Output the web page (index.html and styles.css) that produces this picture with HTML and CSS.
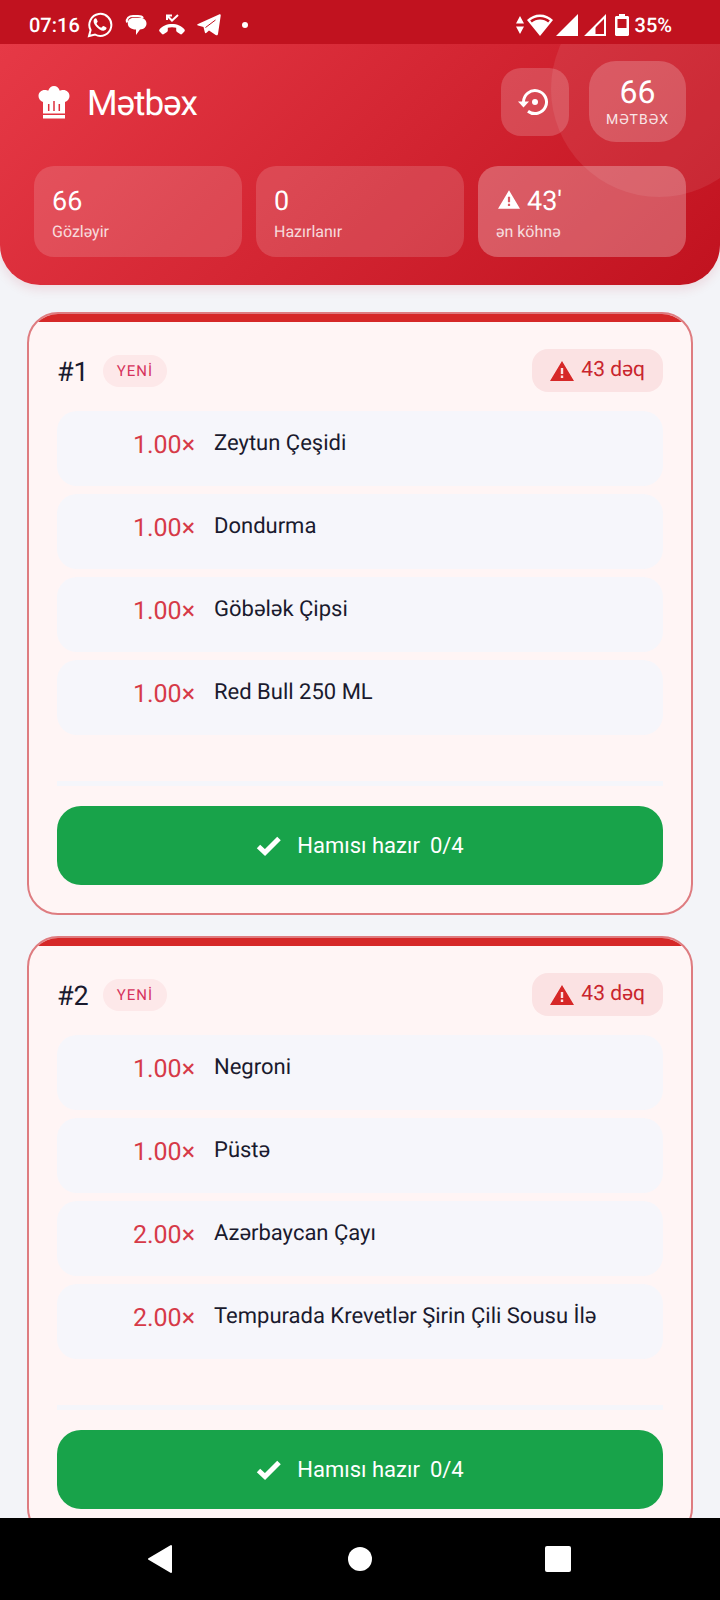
FILE: index.html
```html
<!DOCTYPE html>
<html lang="az">
<head>
  <meta charset="UTF-8">
  <title>Mətbəx</title>
  <meta name="viewport" content="width=device-width, initial-scale=1.0">
  <link rel="stylesheet" href="styles.css">
</head>
<body>

  <div class="status-bar">
    <div class="status-left">
      <span>07:16</span>
      <svg width="26" height="26" viewBox="0 0 26 26" fill="none" stroke="#fff" stroke-width="2">
        <path d="M2 24l1.600-6A11 11 0 1 1 8 22.500z"/>
        <path fill="#fff" stroke="none" d="M9.500 6.800c-.5-1-1.500-.6-2.200.2-1.500 2-.6 4.600 1.600 7.200 2.400 2.800 5.300 4.600 7.600 4.500 1.700-.1 3.200-1.400 3.100-2.900 0-.5-2.900-2-3.500-1.900-.6.100-1.200 1.700-1.800 1.700-1.300-.1-4.500-3-4.700-4.200 0-.5 1.100-1.200 1.100-1.900z"/>
      </svg>
      <svg width="22" height="22" viewBox="0 0 22 22">
        <path fill="none" stroke="#fff" stroke-width="2" d="M2 8.500C1 4.500 4 2 8 2h5c2 0 4 .5 5 2"/>
        <path fill="#fff" d="M9 3.800h6c4 0 6.500 2.500 6.500 5.700s-2.500 6-6.500 6L11 21v-5.500C6 15.500 2.800 13 2.800 9.500S5 3.800 9 3.800z"/>
      </svg>
      <svg width="26" height="22" viewBox="0 0 26 22">
        <path fill="#fff" d="M13 10c5 0 10 2 12.500 5.500.5.700.4 1.300-.1 1.900L23 20c-.5.500-1.300.5-1.900.1L18 18c-.6-.4-.8-.9-.8-1.500v-2.700c-2.700-.8-5.700-.8-8.400 0v2.700c0 .6-.2 1.100-.8 1.500l-3.100 2.100c-.6.400-1.400.4-1.900-.1L.6 17.400c-.5-.6-.6-1.200-.1-1.900C3 12 8 10 13 10z"/>
        <path fill="none" stroke="#fff" stroke-width="2" d="M8 6V1.500h5M8.500 2l4.500 4.500L19 1"/>
      </svg>
      <svg width="24" height="22" viewBox="0 0 24 22">
        <path fill="#fff" d="M1 10L22 .5c1.200-.5 1.900.1 1.700 1.300L21 20c-.3 1.400-1.100 1.700-2.300 1L12 16.500l-2.500 2.300c-.7.700-1.500.4-1.700-.6L6.500 13 1 11.500c-1-.4-1-1.100 0-1.500z"/>
        <path fill="none" stroke="#c1121f" stroke-width="1" d="M8.500 13.500L18.500 6"/>
      </svg>
      <span class="dot"></span>
    </div>
    <div class="status-right">
      <svg width="8" height="20" viewBox="0 0 8 20" fill="#fff"><path d="M0 8.500L4 1l4 7.500zM0 11.500h8L4 19z"/></svg>
      <svg width="26" height="22" viewBox="0 0 26 22">
        <path fill="#fff" d="M13 22L0 6C7-1.500 19-1.500 26 6z"/>
        <path fill="none" stroke="#c1121f" stroke-width="2.500" d="M4 7.500c5-4.500 13-4.500 18 0"/>
      </svg>
      <svg width="22" height="22" viewBox="0 0 22 22"><path fill="#fff" d="M0 22L22 0v22z"/></svg>
      <svg width="22" height="22" viewBox="0 0 22 22">
        <path fill="none" stroke="#fff" stroke-width="2" d="M2.500 21L21 2.500V21z"/>
        <path fill="#fff" d="M1 22L11.500 11.500V22z"/>
      </svg>
      <svg width="14" height="22" viewBox="0 0 14 22">
        <path fill="#fff" fill-rule="evenodd" d="M4 0h6v2h3l1 1v18l-1 1H1l-1-1V3l1-1h3zM2.500 5v9h9V5z"/>
      </svg>
      <span>35%</span>
    </div>
  </div>

  <main class="screen">
    <header class="header">
      <div class="header-row">
        <svg class="chef" width="32" height="34" viewBox="0 0 32 34">
          <path fill="#fff" d="M5 28.500V17C2 16 .5 13.500.5 11 .5 7 4 4.500 7.500 5c1 0 2 .3 2.700.8C11.200 2.500 13.300 1 16 1s4.800 1.500 5.800 4.800c.7-.5 1.700-.8 2.700-.8 3.500-.5 7 2 7 6 0 2.500-1.500 5-4.500 6v11.500zM5 30h22v3.500H5z"/>
          <path stroke="#dd2f3d" stroke-width="1.500" d="M10.700 19v7M16 16v10M21.300 19v7"/>
        </svg>
        <h1>Mətbəx</h1>
        <button type="button" class="history-btn" aria-label="Tarixçə">
          <svg width="34" height="28" viewBox="0 0 34 28">
            <path fill="none" stroke="#fff" stroke-width="3" d="M5.500 14A11.500 11.500 0 1 1 10 23.200"/>
            <path fill="#fff" d="M0 13.500h11l-5.500 6z"/>
            <circle cx="17" cy="14" r="3" fill="#fff"/>
          </svg>
        </button>
        <div class="count">
          <strong>66</strong>
          <span>MƏTBƏX</span>
        </div>
      </div>
      <div class="stats">
        <div class="stat">
          <strong>66</strong>
          <span>Gözləyir</span>
        </div>
        <div class="stat">
          <strong>0</strong>
          <span>Hazırlanır</span>
        </div>
        <div class="stat stat-alert">
          <strong>
            <svg width="22" height="19" viewBox="0 0 24 20"><path fill="#fff" fill-rule="evenodd" d="M12 0l12 20H0zM10.800 7v6h2.400V7zM10.800 14.500V17h2.400v-2.500z"/></svg>
            43'
          </strong>
          <span>ən köhnə</span>
        </div>
      </div>
    </header>

    <section class="orders">
      <article class="order">
        <div class="order-head">
          <h2>#1</h2>
          <span class="tag">YENİ</span>
          <span class="timer">
            <svg width="24" height="20" viewBox="0 0 24 20"><path fill="#d62828" fill-rule="evenodd" d="M12 0l12 20H0zM10.800 7v6h2.400V7zM10.800 14.500V17h2.400v-2.500z"/></svg>
            43 dəq
          </span>
        </div>
        <ul class="items">
          <li><span class="qty">1.00×</span><span class="name">Zeytun Çeşidi</span></li>
          <li><span class="qty">1.00×</span><span class="name">Dondurma</span></li>
          <li><span class="qty">1.00×</span><span class="name">Göbələk Çipsi</span></li>
          <li><span class="qty">1.00×</span><span class="name">Red Bull 250 ML</span></li>
        </ul>
        <div class="order-foot">
          <button type="button" class="ready-btn">
            <svg width="26" height="20" viewBox="0 0 26 20"><path fill="none" stroke="#fff" stroke-width="5" d="M2.500 10.500l6.500 6L23 2.500"/></svg>
            <span>Hamısı hazır</span>
            <span class="progress">0/4</span>
          </button>
        </div>
      </article>

      <article class="order">
        <div class="order-head">
          <h2>#2</h2>
          <span class="tag">YENİ</span>
          <span class="timer">
            <svg width="24" height="20" viewBox="0 0 24 20"><path fill="#d62828" fill-rule="evenodd" d="M12 0l12 20H0zM10.800 7v6h2.400V7zM10.800 14.500V17h2.400v-2.500z"/></svg>
            43 dəq
          </span>
        </div>
        <ul class="items">
          <li><span class="qty">1.00×</span><span class="name">Negroni</span></li>
          <li><span class="qty">1.00×</span><span class="name">Püstə</span></li>
          <li><span class="qty">2.00×</span><span class="name">Azərbaycan Çayı</span></li>
          <li><span class="qty">2.00×</span><span class="name">Tempurada Krevetlər Şirin Çili Sousu İlə</span></li>
        </ul>
        <div class="order-foot">
          <button type="button" class="ready-btn">
            <svg width="26" height="20" viewBox="0 0 26 20"><path fill="none" stroke="#fff" stroke-width="5" d="M2.500 10.500l6.500 6L23 2.500"/></svg>
            <span>Hamısı hazır</span>
            <span class="progress">0/4</span>
          </button>
        </div>
      </article>
    </section>
  </main>

  <nav class="nav-bar">
    <button type="button" aria-label="Geri">
      <svg width="28" height="30" viewBox="2 0 28 30"><path fill="#fff" stroke="#fff" stroke-width="2" stroke-linejoin="round" d="M25 2v26L3 15z"/></svg>
    </button>
    <button type="button" aria-label="Ana ekran">
      <svg width="28" height="30" viewBox="0 0 28 30"><circle cx="14" cy="15" r="12" fill="#fff"/></svg>
    </button>
    <button type="button" aria-label="Son tətbiqlər">
      <svg width="28" height="30" viewBox="0 0 28 30"><rect x="1" y="2" width="26" height="26" rx="2" fill="#fff"/></svg>
    </button>
  </nav>

</body>
</html>
```

FILE: styles.css
```css
* {
  box-sizing: border-box;
}

body {
  font-family: Roboto, 'Noto Sans', sans-serif;
  text-rendering: geometricPrecision;
  background-color: #f3f4f8;
  color: #1a1a2e;
  margin: 0;
  height: 100vh;
  display: flex;
  flex-direction: column;
  overflow: hidden;
}

svg {
  display: block;
  flex: none;
}

button {
  font: inherit;
  color: white;
  border: none;
  padding: 0;
  cursor: pointer;
}

h1, h2, ul {
  margin: 0;
  padding: 0;
  font-weight: 400;
}

strong {
  font-weight: 400;
}

/* phone status bar */
.status-bar {
  flex: none;
  display: flex;
  justify-content: space-between;
  align-items: center;
  height: 44px;
  padding: 6px 48px 0 29px;
  background-color: #c1121f;
  color: white;
  font-size: 20px;
  font-weight: 500;
}

.status-left,
.status-right {
  display: flex;
  align-items: center;
}

.status-left {
  gap: 12px;
}

.status-left span + svg {
  margin-left: -5px;
}

.status-right {
  gap: 6px;
}

.status-right svg:nth-child(-n+2) {
  margin-right: -3px;
}

.status-right svg:nth-child(4) {
  margin-right: 3px;
}

.dot {
  width: 6px;
  height: 6px;
  margin-left: 9px;
  border-radius: 50%;
  background-color: white;
}

.screen {
  flex: 1;
  min-height: 0;
  overflow: hidden;
}

.header {
  position: relative;
  overflow: hidden;
  padding: 17px 34px 28px;
  border-radius: 0 0 40px 40px;
  background: linear-gradient(135deg, #e63946 0%, #c1121f 100%);
  box-shadow: 0 4px 12px rgba(193,18,31,0.12);
  color: white;
}

/* decorative circle in the corner */
.header::before {
  content: "";
  position: absolute;
  top: -63px;
  right: -47px;
  width: 216px;
  height: 216px;
  border-radius: 50%;
  background-color: rgba(255,255,255,0.08);
}

.header-row {
  display: flex;
  align-items: center;
  margin-bottom: 24px;
}

.chef {
  margin: 0 17px 0 4px;
}

.header h1 {
  flex: 1;
  padding-top: 4px;
  font-size: 35px;
  line-height: 40px;
  letter-spacing: -1px;
}

.history-btn {
  display: flex;
  align-items: center;
  justify-content: center;
  width: 68px;
  height: 68px;
  margin-right: 20px;
  border-radius: 20px;
  background-color: rgba(255,255,255,0.18);
}

.count {
  display: flex;
  flex-direction: column;
  align-items: center;
  padding: 13px 17px;
  border-radius: 27px;
  background-color: rgba(255,255,255,0.2);
}

.count strong {
  font-size: 32px;
  line-height: 37px;
}

.count span {
  font-size: 14px;
  line-height: 18px;
  letter-spacing: 1px;
  opacity: 0.85;
}

.stats {
  display: grid;
  grid-template-columns: repeat(3, 1fr);
  gap: 14px;
}

.stat {
  padding: 19px 18px 15px;
  border-radius: 20px;
  background-color: rgba(255,255,255,0.15);
}

.stat-alert {
  background-color: rgba(255,255,255,0.27);
}

.stat strong {
  display: flex;
  align-items: center;
  gap: 7px;
  margin-bottom: 5px;
  font-size: 27px;
  line-height: 32px;
}

.stat svg {
  margin: 0 0 4px 2px;
}

.stat span {
  display: block;
  font-size: 16px;
  line-height: 20px;
  opacity: 0.8;
}

.orders {
  display: flex;
  flex-direction: column;
  gap: 21px;
  padding: 27px;
}

.order {
  position: relative;
  overflow: hidden;
  padding: 35px 28px 28px;
  border: 2px solid #de7c80;
  border-radius: 31px;
  background-color: #fff5f5;
}

.order::before {
  content: "";
  position: absolute;
  top: 0;
  left: 0;
  right: 0;
  height: 8px;
  background-color: #d62828;
}

.order-head {
  display: flex;
  align-items: center;
  margin-bottom: 19px;
}

.order-head h2 {
  padding-top: 2px;
  font-size: 27px;
  line-height: 32px;
}

.tag {
  margin-left: 14px;
  padding: 6px 14px;
  border-radius: 16px;
  background-color: #fde8e9;
  color: #d6335c;
  font-size: 15px;
  line-height: 20px;
  letter-spacing: 1px;
}

.timer {
  display: flex;
  align-items: center;
  gap: 7px;
  margin-left: auto;
  padding: 9px 18px;
  border-radius: 16px;
  background-color: #fbe2e3;
  color: #c9252d;
  font-size: 21px;
  line-height: 25px;
}

.items {
  display: flex;
  flex-direction: column;
  gap: 8px;
  list-style: none;
}

.items li {
  display: flex;
  align-items: flex-start;
  gap: 19px;
  height: 75px;
  padding: 20px 16px;
  border-radius: 20px;
  background-color: #f6f6fb;
}

.qty {
  width: 122px;
  color: #d63a48;
  font-size: 25px;
  line-height: 30px;
  text-align: right;
}

.name {
  font-size: 22px;
  line-height: 25px;
}

.order-foot {
  margin-top: 46px;
  padding-top: 20px;
  border-top: 5px solid #f5f6fb;
}

.ready-btn {
  display: flex;
  align-items: center;
  justify-content: center;
  width: 100%;
  height: 79px;
  border-radius: 24px;
  background-color: #18a34a;
  font-size: 22px;
}

.ready-btn svg {
  margin-right: 15px;
}

.progress {
  margin-left: 10px;
}

/* phone navigation keys */
.nav-bar {
  flex: none;
  display: flex;
  align-items: center;
  justify-content: center;
  gap: 170px;
  height: 82px;
  background-color: black;
}

.nav-bar button {
  background: none;
}
```
